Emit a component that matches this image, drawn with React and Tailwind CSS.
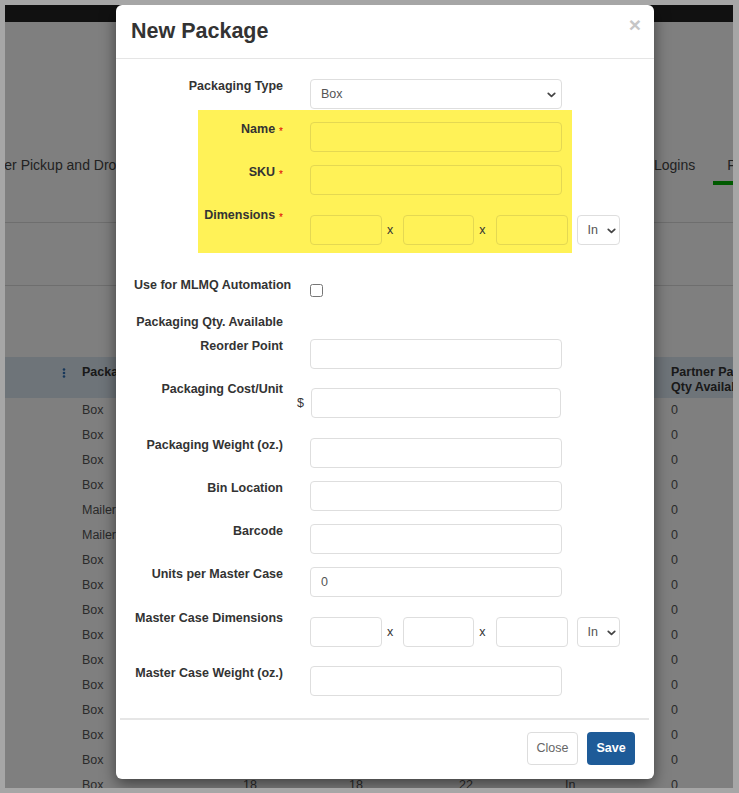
import { useState } from 'react'

const labelCls = 'text-right text-[12.5px] font-bold leading-[15px] text-[#333] whitespace-nowrap'
const inputCls = 'block h-[30px] rounded-[4px] border border-[#dedede] bg-white px-[10px] text-[12.5px] text-[#555] outline-none'
const hlInputCls = 'block h-[30px] rounded-[4px] border border-[#e4d852] bg-transparent px-[10px] text-[12.5px] text-[#555] outline-none'

// only the first column and the last two columns peek out from behind the modal
const tableRows = [
  ['Box', '', '', '', '', '0'],
  ['Box', '', '', '', '', '0'],
  ['Box', '', '', '', '', '0'],
  ['Box', '', '', '', '', '0'],
  ['Mailer', '', '', '', '', '0'],
  ['Mailer', '', '', '', '', '0'],
  ['Box', '', '', '', '', '0'],
  ['Box', '', '', '', '', '0'],
  ['Box', '', '', '', '', '0'],
  ['Box', '', '', '', '', '0'],
  ['Box', '', '', '', '', '0'],
  ['Box', '', '', '', '', '0'],
  ['Box', '', '', '', '', '0'],
  ['Box', '', '', '', '', '0'],
  ['Box', '', '', '', '', '0'],
  ['Box', '18', '18', '22', 'In', '0'],
]

function Chevron({ className }) {
  return (
    <svg className={className} viewBox="0 0 10 7" fill="none">
      <path d="M1.2 1.5 L5 5.2 L8.8 1.5" stroke="#444" strokeWidth="2" strokeLinecap="round" strokeLinejoin="round" />
    </svg>
  )
}

function Select({ className, value, chevronCls }) {
  return (
    <div className={`relative h-[30px] rounded-[4px] border border-[#dedede] bg-white text-[12.5px] leading-[28px] text-[#555] ${className}`}>
      <span className="pl-[10px]">{value}</span>
      <Chevron className={chevronCls} />
    </div>
  )
}

function Row({ className, cols = 'grid-cols-[149px_1fr]', label, req, children }) {
  return (
    <div className={`grid gap-x-[27px] ${cols} ${className}`}>
      <div className={labelCls}>
        {label}
        {req && <span className="relative top-[2px] ml-[4px] text-[10px] font-normal text-[#e00000]">*</span>}
      </div>
      <div>{children}</div>
    </div>
  )
}

function DimInputs({ cls }) {
  return (
    <div className="flex items-center">
      <input className={`${cls} w-[72px]`} />
      <span className="pl-[5px] pr-[10px] text-[12.5px] text-[#333]">x</span>
      <input className={`${cls} w-[71px]`} />
      <span className="pl-[5px] pr-[10px] text-[12.5px] text-[#333]">x</span>
      <input className={`${cls} w-[72px]`} />
      <Select className="ml-[9px] w-[43px] shrink-0" value="In" chevronCls="absolute right-[3px] top-[12px] h-[6px] w-[9px]" />
    </div>
  )
}

function BackgroundPage() {
  return (
    <div className="text-[#444]">
      <div className="h-[17px] bg-[#222]" />
      <div className="mt-[133px] flex whitespace-nowrap text-[14px] leading-[20px]">
        <span className="ml-[-31px] w-[680px] shrink-0 pb-[6px]">Carrier Pickup and Drop Off</span>
        <span className="shrink-0 pb-[6px]">Logins</span>
        <span className="ml-[18px] shrink-0 border-b-4 border-[#00b400] px-[14px] pb-[6px]">Packaging</span>
      </div>
      <div className="mt-[37px] h-px bg-[#dddddd]" />
      <div className="mt-[62px] h-px bg-[#dddddd]" />
      <div className="mt-[71px]">
        <div className="grid h-[41px] grid-cols-[77px_161px_106px_110px_106px_106px_1fr] bg-[#dce8f2] pt-[8px] text-[12.5px] font-bold leading-[15px] text-[#333] whitespace-nowrap">
          <div className="pl-[57px] pt-[3px]">
            <svg width="4" height="10" viewBox="0 0 4 10" fill="#2f6fb5">
              <circle cx="2" cy="1.5" r="1.3" />
              <circle cx="2" cy="5" r="1.3" />
              <circle cx="2" cy="8.5" r="1.3" />
            </svg>
          </div>
          <div>Package</div>
          <div />
          <div />
          <div />
          <div />
          <div>
            <div>Partner Packaging</div>
            <div>Qty Available</div>
          </div>
        </div>
        {tableRows.map((r, i) => (
          <div key={i} className="grid h-[25px] grid-cols-[77px_161px_106px_110px_106px_106px_1fr] items-center text-[12.5px] text-[#555]">
            <div />
            <div>{r[0]}</div>
            <div>{r[1]}</div>
            <div>{r[2]}</div>
            <div>{r[3]}</div>
            <div>{r[4]}</div>
            <div>{r[5]}</div>
          </div>
        ))}
      </div>
    </div>
  )
}

function NewPackageModal() {
  const [auto, setAuto] = useState(false)

  return (
    <div className="absolute left-[111px] top-0 w-[538px] rounded-[6px] bg-white shadow-[0_5px_15px_rgba(0,0,0,0.5)]">
      <div className="flex h-[54px] items-start justify-between border-b border-[#e5e5e5] pl-[15px] pr-[13px]">
        <h4 className="mt-[13px] text-[21.5px] font-bold leading-[26px] text-[#333]">New Package</h4>
        <button className="mt-[9px] text-[21px] font-bold leading-[21px] text-[#c6c6c6]">×</button>
      </div>

      <div className="pl-[18px] pt-[20px]">
        <Row label="Packaging Type">
          <Select className="w-[252px]" value="Box" chevronCls="absolute right-[5px] top-[12px] h-[6px] w-[9px]" />
        </Row>

        <div className="ml-[64px] mt-[1px] w-[374px] bg-[#fff257] pb-[8px] pt-[12px]">
          <Row cols="grid-cols-[85px_1fr]" label="Name" req>
            <input className={`${hlInputCls} w-[252px]`} />
          </Row>
          <Row className="mt-[13px]" cols="grid-cols-[85px_1fr]" label="SKU" req>
            <input className={`${hlInputCls} w-[252px]`} />
          </Row>
          <Row className="mt-[13px]" cols="grid-cols-[85px_1fr]" label="Dimensions" req>
            <div className="mt-[7px]">
              <DimInputs cls={hlInputCls} />
            </div>
          </Row>
        </div>

        <div className="mt-[25px] grid grid-cols-[149px_1fr] gap-x-[27px]">
          <div className="text-[12.5px] font-bold leading-[15px] text-[#333] whitespace-nowrap">Use for MLMQ Automation</div>
          <div>
            <input
              type="checkbox"
              checked={auto}
              onChange={e => setAuto(e.target.checked)}
              className="m-0 mt-[6px] block h-[13px] w-[13px]"
            />
          </div>
        </div>

        <Row className="mt-[18px]" label="Packaging Qty. Available" />

        <Row className="mt-[9px]" label="Reorder Point">
          <input className={`${inputCls} w-[252px]`} />
        </Row>

        <Row className="mt-[13px]" label="Packaging Cost/Unit">
          <div className="ml-[-13px] mt-[6px] flex items-center">
            <span className="w-[7px] text-[12.5px] text-[#333]">$</span>
            <input className={`${inputCls} ml-[7px] w-[250px]`} />
          </div>
        </Row>

        <Row className="mt-[20px]" label="Packaging Weight (oz.)">
          <input className={`${inputCls} w-[252px]`} />
        </Row>

        <Row className="mt-[13px]" label="Bin Location">
          <input className={`${inputCls} w-[252px]`} />
        </Row>

        <Row className="mt-[13px]" label="Barcode">
          <input className={`${inputCls} w-[252px]`} />
        </Row>

        <Row className="mt-[13px]" label="Units per Master Case">
          <input className={`${inputCls} w-[252px]`} defaultValue="0" />
        </Row>

        <Row className="mt-[14px]" label="Master Case Dimensions">
          <div className="mt-[6px]">
            <DimInputs cls={inputCls} />
          </div>
        </Row>

        <Row className="mt-[19px]" label="Master Case Weight (oz.)">
          <input className={`${inputCls} w-[252px]`} />
        </Row>
      </div>

      <div className="ml-[4px] mr-[5px] mt-[22px] h-[2px] bg-[#e6e6e6]" />

      <div className="mt-[12px] flex justify-end gap-[9px] pb-[14px] pr-[19px]">
        <button className="h-[33px] w-[51px] rounded-[4px] border border-[#dddddd] bg-white text-[12.5px] text-[#666]">Close</button>
        <button className="h-[33px] w-[48px] rounded-[4px] bg-[#1e5b98] text-[12.5px] font-bold text-white">Save</button>
      </div>
    </div>
  )
}

export default function App() {
  return (
    <div className="h-[793px] w-[739px] bg-[#a6a6a6] p-[5px] font-['Liberation_Sans',Arial,sans-serif]">
      <div className="relative h-[783px] w-[728px] overflow-hidden bg-white">
        <BackgroundPage />
        <div className="absolute inset-0 bg-black/50" />
        <NewPackageModal />
      </div>
    </div>
  )
}
